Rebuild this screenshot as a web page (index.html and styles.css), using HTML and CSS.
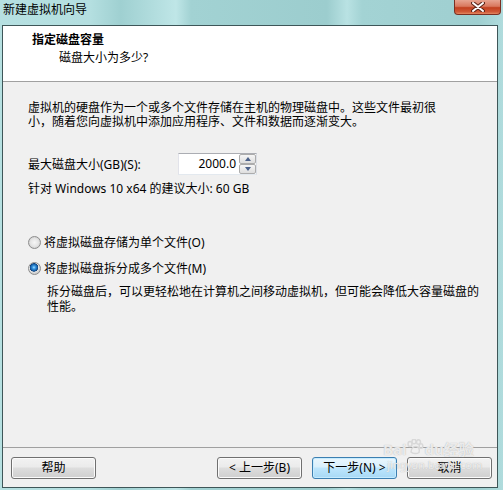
FILE: index.html
```html
<!DOCTYPE html>
<html lang="zh-CN">
<head>
    <meta charset="UTF-8">
    <meta name="viewport" content="width=device-width, initial-scale=1.0">
    <title>新建虚拟机向导</title>
    <link rel="stylesheet" href="styles.css">
</head>
<body>
    <div class="window">
        <div class="titlebar">
            <span class="title">新建虚拟机向导</span>
            <div class="close">
                <svg width="14" height="10" viewBox="0 0 14 10">
                    <path d="M2 1 L12 9 M12 1 L2 9" stroke="#5a2418" stroke-width="4" stroke-linecap="round"/>
                    <path d="M2 1 L12 9 M12 1 L2 9" stroke="#ffffff" stroke-width="2" stroke-linecap="round"/>
                </svg>
            </div>
        </div>
        <div class="frame">
            <div class="header">
                <div class="header-title">指定磁盘容量</div>
                <div class="header-sub">磁盘大小为多少?</div>
            </div>
            <div class="content">
                <p class="intro">虚拟机的硬盘作为一个或多个文件存储在主机的物理磁盘中。这些文件最初很<br>小，随着您向虚拟机中添加应用程序、文件和数据而逐渐变大。</p>
                <div class="size-row">
                    <span class="size-label">最大磁盘大小(GB)(S):</span>
                    <div class="spin">
                        <div class="spin-value">2000.0</div>
                        <div class="spin-btns">
                            <span class="spin-btn"><span class="arrow-up"></span></span>
                            <span class="spin-btn"><span class="arrow-down"></span></span>
                        </div>
                    </div>
                </div>
                <p class="hint">针对 Windows 10 x64 的建议大小: 60 GB</p>
                <div class="options">
                    <div class="option"><span class="radio"></span>将虚拟磁盘存储为单个文件(O)</div>
                    <div class="option option-second"><span class="radio checked"></span>将虚拟磁盘拆分成多个文件(M)</div>
                    <p class="option-desc">拆分磁盘后，可以更轻松地在计算机之间移动虚拟机，但可能会降低大容量磁盘的<br>性能。</p>
                </div>
            </div>
            <div class="footer">
                <div class="btn">帮助</div>
                <div class="btn btn-back">&lt; 上一步(B)</div>
                <div class="btn btn-default">下一步(N) &gt;</div>
                <div class="btn">取消</div>
            </div>
        </div>
        <!-- 百度经验水印 -->
        <div class="watermark">
            <div class="wm-logo">Bai<svg width="18" height="16" viewBox="0 0 18 16">
                <g fill="none" stroke="#d8d8d8" stroke-width="1.5">
                    <ellipse cx="4" cy="5" rx="2" ry="2.5"/>
                    <ellipse cx="8" cy="2.5" rx="2" ry="2.3"/>
                    <ellipse cx="12.5" cy="3" rx="2" ry="2.3"/>
                    <ellipse cx="15" cy="7" rx="1.8" ry="2.2"/>
                    <path d="M5 13 C5 9 8 7.5 10 7.5 C13 7.5 14 11 13 13.5 C11 15 7 15 5 13 Z"/>
                </g>
            </svg>du经验</div>
            <div class="wm-url">jingyan.baidu.com</div>
        </div>
    </div>
</body>
</html>
```
FILE: styles.css
```css
* {
    margin: 0;
    padding: 0;
    box-sizing: border-box;
}
body {
    font-family: "Noto Sans", "Noto Sans CJK SC", sans-serif;
    font-size: 12px;
    color: #000;
}
.window {
    position: relative;
    width: 503px;
    height: 490px;
    overflow: hidden;
    /* 玻璃边框 */
    background: linear-gradient(90deg, #b6e0e1 0%, #b4dfe0 18%, #9fd0d1 24%, #bfe6e7 35%, #a2d2d3 38%, #9ccdce 65%, #b9e2e3 69%, #a3d3d4 72%, #9fcfd0 95%, #b0dcdd 100%);
}
.titlebar {
    height: 25px;
    display: flex;
    justify-content: space-between;
    align-items: flex-start;
}
.title {
    padding-left: 3px;
    line-height: 20px;
    font-size: 12px;
    color: #000;
}
.close {
    width: 47px;
    height: 15px;
    margin-right: 2px;
    border: 1px solid #7b2f22;
    border-top: none;
    border-radius: 0 0 4px 4px;
    background: linear-gradient(#e7a491 0%, #d9785e 45%, #c2401f 55%, #d05a38 85%, #e48a63 100%);
    display: flex;
    justify-content: center;
    align-items: center;
}
.frame {
    height: 463px;
    margin: 0 5px 0 2px;
    border: 1px solid #3e5658;
    background: #f0f0f0;
    display: flex;
    flex-direction: column;
}
.header {
    background: #fff;
    border-bottom: 1px solid #a0a0a0;
    padding: 6px 0 15px 29px;
    line-height: 16px;
}
.header-title {
    font-weight: bold;
}
.header-sub {
    margin-top: 2px;
    padding-left: 27px;
}
.content {
    flex: 1;
    padding-left: 25px;
}
.intro {
    margin-top: 19px;
    line-height: 14px;
    white-space: nowrap;
}
.size-row {
    margin-top: 24px;
    height: 22px;
    display: flex;
    align-items: center;
}
.size-label {
    width: 150px;
}
.spin {
    width: 79px;
    height: 22px;
    display: flex;
    border: 1px solid;
    border-color: #abadb3 #dbdfe6 #e3e9ef #e2e3ea;
    background: #fff;
}
.spin-value {
    flex: 1;
    text-align: right;
    padding-right: 3px;
    line-height: 20px;
}
.spin-btns {
    width: 17px;
    display: flex;
    flex-direction: column;
}
.spin-btn {
    flex: 1;
    border: 1px solid #acacac;
    border-radius: 2px;
    background: linear-gradient(#f6f6f6, #dedede);
    display: flex;
    justify-content: center;
    align-items: center;
}
.arrow-up {
    border-left: 3.5px solid transparent;
    border-right: 3.5px solid transparent;
    border-bottom: 4px solid #4c6189;
}
.arrow-down {
    border-left: 3.5px solid transparent;
    border-right: 3.5px solid transparent;
    border-top: 4px solid #4c6189;
}
.hint {
    margin-top: 7px;
    line-height: 14px;
}
.options {
    margin-top: 38px;
}
.option {
    height: 16px;
    display: flex;
    align-items: center;
}
.option-second {
    margin-top: 10px;
}
.radio {
    width: 13px;
    height: 13px;
    margin-right: 3px;
    border-radius: 50%;
    border: 1px solid #8d8d8d;
    background: radial-gradient(circle at 50% 50%, #f6f6f6 0, #e4e4e4 4px, #cfcfcf 6px);
}
.radio.checked {
    background: radial-gradient(circle at 45% 40%, #a8e2ff 0, #3a9ae6 1.5px, #14589f 3.5px, #0e3f78 4px, #e6e6e6 4.5px, #cfcfcf 6px);
}
.option-desc {
    margin-top: 8px;
    padding-left: 19px;
    line-height: 15px;
    white-space: nowrap;
}
.footer {
    border-top: 1px solid #a0a0a0;
    padding: 9px 5px 8px 8px;
    display: flex;
    gap: 10px;
}
.btn {
    width: 85px;
    height: 22px;
    line-height: 20px;
    text-align: center;
    border: 1px solid #707070;
    border-radius: 3px;
    background: linear-gradient(#f2f2f2 0%, #ebebeb 45%, #dddddd 50%, #cfcfcf 100%);
    box-shadow: inset 0 0 0 1px #fbfbfb;
}
.btn-back {
    margin-left: auto;
}
.btn-default {
    border-color: #3c7fb1;
    background: linear-gradient(#eaf6fd 0%, #d9f0fc 45%, #bee6fd 50%, #a7d9f5 100%);
    box-shadow: inset 0 0 0 1px #c6ecff;
}
.watermark {
    position: absolute;
    left: 383px;
    top: 439px;
    color: rgba(255, 255, 255, 0.75);
    text-shadow: 0 0 1px #a8a8a8;
    pointer-events: none;
}
.wm-logo {
    display: flex;
    align-items: flex-start;
    font-size: 15px;
    font-weight: bold;
    line-height: 20px;
}
.wm-url {
    margin-left: 4px;
    font-size: 11px;
    line-height: 12px;
}
```
